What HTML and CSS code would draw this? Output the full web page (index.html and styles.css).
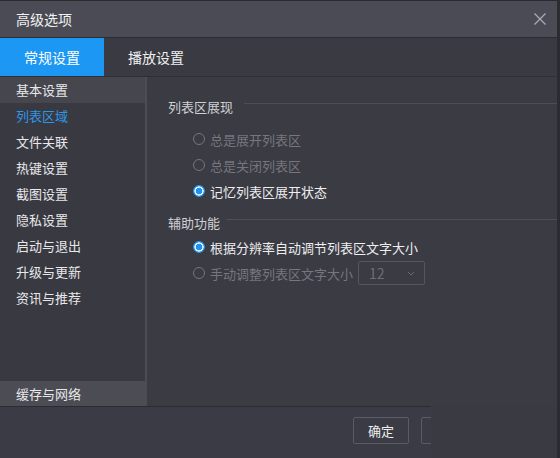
FILE: index.html
```html
<!DOCTYPE html>
<html lang="zh-CN">
<head>
    <meta charset="UTF-8">
    <title>高级选项</title>
    <link rel="stylesheet" href="styles.css">
</head>
<body>
    <div class="window">
        <div class="titlebar">
            <span class="title">高级选项</span>
            <svg class="close" width="12" height="12" viewBox="0 0 12 12">
                <path d="M0.5 0.5 L11.5 11.5 M11.5 0.5 L0.5 11.5" stroke="#a9aab0" stroke-width="1.3" fill="none"/>
            </svg>
        </div>

        <div class="tabs">
            <div class="tab active">常规设置</div>
            <div class="tab">播放设置</div>
        </div>

        <div class="main">
            <ul class="sidebar">
                <li class="hover">基本设置</li>
                <li class="current">列表区域</li>
                <li>文件关联</li>
                <li>热键设置</li>
                <li>截图设置</li>
                <li>隐私设置</li>
                <li>启动与退出</li>
                <li>升级与更新</li>
                <li>资讯与推荐</li>
                <li class="hover bottom">缓存与网络</li>
            </ul>

            <div class="content">
                <div class="group-title"><span>列表区展现</span></div>
                <div class="radio-row disabled"><i class="radio"></i>总是展开列表区</div>
                <div class="radio-row disabled"><i class="radio"></i>总是关闭列表区</div>
                <div class="radio-row"><i class="radio on"></i>记忆列表区展开状态</div>

                <div class="group-title second"><span>辅助功能</span></div>
                <div class="radio-row"><i class="radio on"></i>根据分辨率自动调节列表区文字大小</div>
                <div class="radio-row disabled">
                    <i class="radio"></i>手动调整列表区文字大小
                    <div class="select">
                        <span>12</span>
                        <svg width="8" height="5" viewBox="0 0 8 5"><path d="M1 1 L4 4 L7 1" stroke="#6c6d74" fill="none"/></svg>
                    </div>
                </div>
            </div>
        </div>

        <div class="footer">
            <div class="footer-bar">
                <div class="buttons">
                    <button class="btn">确定</button>
                    <button class="btn"></button>
                </div>
            </div>
        </div>
    </div>
</body>
</html>
```

FILE: styles.css
```css
* {
    box-sizing: border-box;
}

body {
    margin: 0;
    width: 560px;
    height: 458px;
    overflow: hidden;
    background-color: #3a3b44;
    font-family: "Noto Sans CJK SC", "Noto Sans", sans-serif;
    font-size: 13px;
    color: #e6e6e8;
}

.window {
    display: flex;
    flex-direction: column;
    height: 458px;
    border-top: 1px solid #2b2c31;
    border-right: 3px solid #2b2c31;
}

/* title bar */
.titlebar {
    height: 37px;
    flex-shrink: 0;
    display: flex;
    align-items: center;
    justify-content: space-between;
    padding: 0 11px 0 16px;
    background-color: #4a4b55;
    border-bottom: 1px solid #2c2d33;
}

.title {
    font-size: 14px;
    color: #f2f2f2;
}

/* top tabs */
.tabs {
    height: 39px;
    flex-shrink: 0;
    display: flex;
    background-color: #393a42;
    border-bottom: 1px solid #2f3037;
}

.tab {
    width: 104px;
    display: flex;
    align-items: center;
    justify-content: center;
    font-size: 14px;
    color: #f0f0f0;
}

.tab.active {
    background-color: #1d97f4;
    color: #fff;
}

.main {
    height: 329px;
    flex-shrink: 0;
    display: flex;
}

/* left menu */
.sidebar {
    width: 147px;
    margin: 0;
    padding: 0;
    list-style: none;
    display: flex;
    flex-direction: column;
    background-color: #383941;
    border-right: 2px solid #4b4c54;
}

.sidebar li {
    height: 26px;
    line-height: 26px;
    padding-left: 16px;
    color: #e8e8ea;
}

.sidebar li.hover {
    background-color: #45464e;
}

.sidebar li.current {
    color: #2f96e6;
}

.sidebar li.bottom {
    margin-top: auto;
    height: 25px;
    line-height: 25px;
    background-color: #4b4c54;
}

/* right panel */
.content {
    flex: 1;
    padding: 19px 0 0 21px;
    background-color: #3a3b43;
}

.group-title {
    display: flex;
    align-items: center;
    height: 20px;
    margin-bottom: 10px;
    color: #cfd0d3;
}

.group-title::after {
    content: "";
    flex: 1;
    height: 1px;
    margin: -5px 0 0 11px;
    background-color: #4d4e56;
}

.group-title.second {
    margin-top: 8px;
    margin-bottom: 2px;
}

.group-title.second::after {
    margin-left: 6px;
}

.radio-row {
    height: 26px;
    display: flex;
    align-items: center;
    padding-left: 25px;
    color: #eeeef0;
}

.radio-row.disabled {
    color: #76777e;
}

.radio {
    width: 12px;
    height: 12px;
    margin-right: 5px;
    border-radius: 50%;
    border: 1px solid #75767d;
}

.radio.on {
    border-color: #2a95ee;
    background: radial-gradient(circle, #1d95f0 0 3px, #e4f1fc 3.6px 4.4px, #2a95ee 5px);
}

.select {
    width: 67px;
    height: 24px;
    margin-left: 5px;
    display: flex;
    align-items: center;
    justify-content: space-between;
    padding: 0 9px 0 10px;
    border: 1px solid #55565e;
    border-radius: 2px;
    color: #6d6e75;
    font-size: 14px;
}

/* bottom buttons */
.footer {
    flex: 1;
    background-color: #393a42;
}

.footer-bar {
    width: 431px;
    height: 100%;
    overflow: hidden;
    border-top: 1px solid #2b2c32;
    background-color: #3a3b44;
}

.buttons {
    display: flex;
    gap: 12px;
    padding: 10px 0 0 353px;
}

.btn {
    flex-shrink: 0;
    width: 56px;
    height: 27px;
    padding: 0;
    background: transparent;
    border: 1px solid #5a5b63;
    border-radius: 2px;
    color: #eeeeee;
    font-family: inherit;
    font-size: 13px;
}
```
